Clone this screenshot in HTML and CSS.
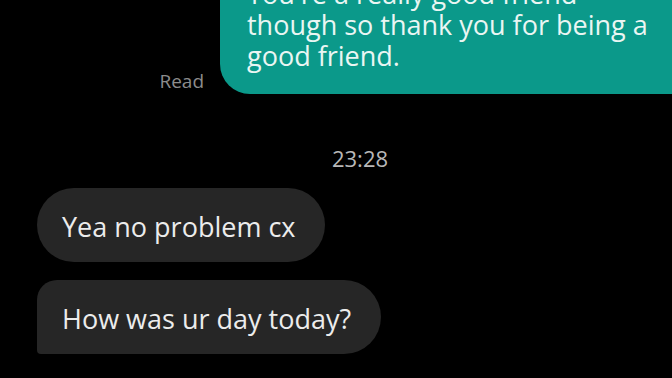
FILE: index.html
```html
<!DOCTYPE html>
<html lang="en">
<head>
    <meta charset="UTF-8">
    <meta name="viewport" content="width=device-width, initial-scale=1.0">
    <title>Messages</title>
    <link rel="stylesheet" href="styles.css">
</head>
<body>
    <div class="thread">
        <div class="sent-row">
            <span class="status">Read</span>
            <div class="bubble sent">You're a really good friend though so thank you for being a good friend.</div>
        </div>

        <div class="timestamp">23:28</div>

        <div class="bubble received first">Yea no problem cx</div>
        <div class="bubble received last">How was ur day today?</div>
    </div>
</body>
</html>
```

FILE: styles.css
```css
body {
    margin: 0;
    background: #000;
    overflow: hidden;
    font-family: "Open Sans", "Noto Sans", sans-serif;
}

.thread {
    width: 720px;
    margin-top: -40px;
    display: flex;
    flex-direction: column;
}

.sent-row {
    display: flex;
    justify-content: flex-end;
    align-items: flex-end;
    gap: 16px;
    padding-right: 20px;
}

.status {
    color: #8c8c8c;
    font-size: 19px;
}

.bubble {
    font-size: 27px;
    line-height: 31px;
}

.sent {
    width: 420px;
    background: #0b998a;
    color: #eaf6f3;
    padding: 18px 33px 23px 27px;
    border-radius: 30px;
}

.timestamp {
    color: #b8b8b8;
    font-size: 22px;
    text-align: center;
    margin-top: 49px;
}

.received {
    align-self: flex-start;
    margin-left: 37px;
    background: #262626;
    color: #ececec;
    padding: 23px 30px 20px 25px;
}

.first {
    margin-top: 15px;
    border-radius: 37px;
}

.last {
    margin-top: 18px;
    border-radius: 20px 37px 37px 4px;
}
```
